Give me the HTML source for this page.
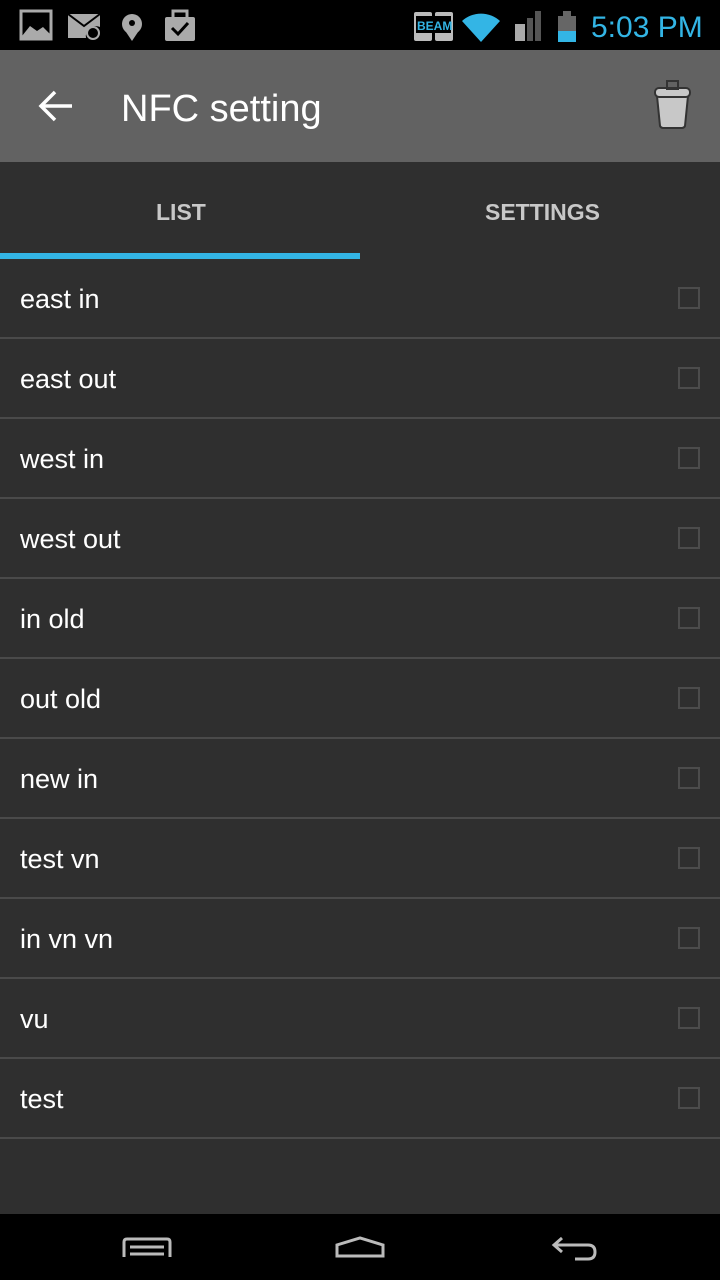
<!DOCTYPE html>
<html><head><style>
*{margin:0;padding:0;box-sizing:border-box}
body{width:720px;height:1280px;background:#2f2f2f;font-family:"Liberation Sans",sans-serif;position:relative;overflow:hidden}
#sb{position:absolute;top:0;left:0;width:720px;height:50px;background:#000}
#ab{position:absolute;top:50px;left:0;width:720px;height:112px;background:#626262}
.title{position:absolute;left:121px;top:87px;color:#fff;font-size:38px;line-height:44px}
.tab{position:absolute;top:199px;font-size:23px;font-weight:bold;color:#c8c8c8;letter-spacing:0px}
#ind{position:absolute;left:0;top:253px;width:360px;height:6px;background:#33b5e5}
.row{position:absolute;left:0;width:720px;height:80px;border-bottom:2px solid #4a4a4a}
.row span{position:absolute;left:20px;top:25px;font-size:27px;color:#fff}
.row i{position:absolute;left:678px;top:28px;width:22px;height:22px;border:2px solid #4c4c4c}
#nb{position:absolute;top:1214px;left:0;width:720px;height:66px;background:#000}
</style></head><body>
<div id="sb">
<svg width="720" height="50" style="position:absolute;left:0;top:0">
<rect x="21" y="11" width="30" height="28" fill="none" stroke="#aaa" stroke-width="3"/>
<path d="M22 36 L30 26 L37 31 L43 27 L50 34 L50 38 L22 38Z" fill="#aaa"/>
<path d="M68 14 H100 V27 A10 10 0 0 0 86 38 H68Z" fill="#aaa"/><path d="M68 14 L84 26 L100 14" stroke="#000" stroke-width="2" fill="none"/>
<circle cx="93" cy="33" r="6" fill="none" stroke="#aaa" stroke-width="2"/>
<circle cx="132" cy="24" r="10" fill="#aaa"/><circle cx="132" cy="23" r="3" fill="#000"/><path d="M124 29 L132 41 L140 29Z" fill="#aaa"/>
<rect x="165" y="17" width="30" height="24" rx="2" fill="#aaa"/><path d="M173 17 V11 H187 V17" stroke="#aaa" stroke-width="3" fill="none"/><path d="M172 28 L178 34 L188 23" stroke="#000" stroke-width="3" fill="none"/>
<rect x="414" y="12" width="18" height="29" rx="2" fill="#bbb"/><rect x="435" y="12" width="18" height="29" rx="2" fill="#bbb"/>
<rect x="416" y="16" width="35" height="17" fill="#000"/><text x="417" y="30" font-size="12" font-weight="bold" fill="#33b5e5" font-family="Liberation Sans">BEAM</text>
<path d="M462 21 A28 28 0 0 1 500 21 L481 42Z" fill="#33b5e5"/>
<rect x="515" y="24" width="10" height="17" fill="#aaa"/><rect x="527" y="18" width="6" height="23" fill="#555"/><rect x="535" y="11" width="6" height="30" fill="#555"/>
<rect x="558" y="16" width="18" height="26" fill="#666"/><rect x="563" y="11" width="8" height="5" fill="#666"/><rect x="558" y="31" width="18" height="11" fill="#33b5e5"/>
<text x="591" y="37" font-size="30" fill="#33b5e5" font-family="Liberation Sans">5:03 PM</text>
</svg></div>
<div id="ab">
<svg width="720" height="112" style="position:absolute;left:0;top:0">
<path d="M72 56 H42 M55 42 L41 56 L55 70" stroke="#fff" stroke-width="3.5" fill="none"/>
<path d="M657 46 H688 L685 76 Q684 78 682 78 H663 Q661 78 660 76Z" fill="#c8c8c8" stroke="#333" stroke-width="2"/>
<rect x="655" y="38" width="35" height="9" rx="4" fill="#c8c8c8" stroke="#333" stroke-width="2"/>
<rect x="667" y="31" width="11" height="8" fill="none" stroke="#333" stroke-width="2"/>
</svg></div>
<div class="title">NFC setting</div>
<div class="tab" style="left:156px">LIST</div>
<div class="tab" style="left:485px">SETTINGS</div>
<div id="ind"></div>
<div class="row" style="top:259px"><span>east in</span><i></i></div>
<div class="row" style="top:339px"><span>east out</span><i></i></div>
<div class="row" style="top:419px"><span>west in</span><i></i></div>
<div class="row" style="top:499px"><span>west out</span><i></i></div>
<div class="row" style="top:579px"><span>in old</span><i></i></div>
<div class="row" style="top:659px"><span>out old</span><i></i></div>
<div class="row" style="top:739px"><span>new in</span><i></i></div>
<div class="row" style="top:819px"><span>test vn</span><i></i></div>
<div class="row" style="top:899px"><span>in vn vn</span><i></i></div>
<div class="row" style="top:979px"><span>vu</span><i></i></div>
<div class="row" style="top:1059px"><span>test</span><i></i></div>
<div id="nb">
<svg width="720" height="66" style="position:absolute;left:0;top:0">
<path d="M124 43 V28 Q124 25 127 25 H167 Q170 25 170 28 V43" stroke="#bbb" stroke-width="3" fill="none"/>
<path d="M130 33 H164 M130 40 H164" stroke="#bbb" stroke-width="3"/>
<path d="M337 42 V31 L360 24 L383 31 V42Z" stroke="#bbb" stroke-width="3" fill="none"/>
<path d="M562 24 L554 31 L562 38 M554 31 H588 Q595 31 595 38 Q595 45 588 45 H575" stroke="#bbb" stroke-width="3" fill="none"/>
</svg></div>
</body></html>
